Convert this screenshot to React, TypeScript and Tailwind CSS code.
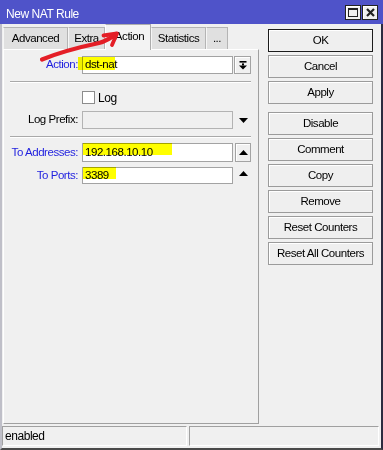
import React from "react";

function Tab({ label, w, active }: { label: string; w: string; active?: boolean }) {
  if (active) {
    return (
      <div
        className={`${w} h-[26px] -mb-[1px] relative z-10 border border-b-0 border-[#adadad] border-l-white bg-[#f3f3f3] flex justify-center pt-[6px] pl-[3px]`}
      >
        {label}
      </div>
    );
  }
  return (
    <div
      className={`${w} h-[22px] border border-b-0 border-[#b4b4b4] border-l-[#f6f6f6] bg-[#e0e0e0] flex items-center justify-center pt-[1px]`}
    >
      {label}
    </div>
  );
}

function SideButton({ label, main, className = "" }: { label: string; main?: boolean; className?: string }) {
  return (
    <button
      className={`h-[23px] w-[105px] border bg-[#efefef] shadow-[inset_1px_1px_0_#ffffff] flex items-center justify-center ${
        main ? "border-[#1c1c1c]" : "border-[#9b9b9b]"
      } ${className}`}
    >
      {label}
    </button>
  );
}

function UpTriangle() {
  return (
    <svg width="9" height="5" viewBox="0 0 9 5">
      <polygon points="0,5 9,5 4.5,0" fill="#000" />
    </svg>
  );
}

function DownTriangle() {
  return (
    <svg width="9" height="5" viewBox="0 0 9 5">
      <polygon points="0,0 9,0 4.5,5" fill="#000" />
    </svg>
  );
}

function Separator() {
  return <div className="ml-[6px] w-[241px] h-[2px] border-t border-t-[#a9a9a9] border-b border-b-white" />;
}

export default function App() {
  return (
    <div className="relative w-[383px] h-[450px] flex flex-col bg-[#f0f0f0] overflow-hidden font-['Liberation_Sans',Arial,sans-serif] text-[11.5px] tracking-[-0.45px] leading-none text-black">
      {/* title bar */}
      <div className="h-[24px] shrink-0 bg-[#4f53c9] flex items-center pl-[6px] pr-[5px]">
        <span className="text-white text-[12px] pt-[4px]">New NAT Rule</span>
        <div className="ml-auto flex gap-[1px] pt-[1px]">
          <div className="w-[16px] h-[15px] bg-[#f0f0f0] border border-[#222] shadow-[inset_1px_1px_0_#fff] flex items-center justify-center">
            <div className="w-[10px] h-[9px] border border-t-2 border-[#222]" />
          </div>
          <div className="w-[16px] h-[15px] bg-[#f0f0f0] border border-[#222] shadow-[inset_1px_1px_0_#fff] flex items-center justify-center">
            <svg width="9" height="9" viewBox="0 0 9 9">
              <path d="M1 1 L8 8 M8 1 L1 8" stroke="#222" strokeWidth="2.2" />
            </svg>
          </div>
        </div>
      </div>

      <div className="flex-1 flex flex-col border-l-2 border-r-2 border-b-2 border-l-[#bfbfc8] border-r-[#2c2c40] border-b-[#4a4a4a]">
        <div className="flex-1 flex pl-[1px]">
          {/* tabs + panel */}
          <div className="w-[256px] flex flex-col">
            <div className="h-[25px] flex items-end">
              <Tab label="Advanced" w="w-[65px]" />
              <Tab label="Extra" w="w-[37px]" />
              <Tab label="Action" w="w-[46px]" active />
              <Tab label="Statistics" w="w-[55px]" />
              <Tab label="..." w="w-[22px]" />
            </div>
            <div className="flex-1 border border-l-white border-t-white border-r-[#a0a0a0] border-b-[#a0a0a0] flex flex-col">
              {/* Action */}
              <div className="mt-[6px] h-[18px] flex items-center">
                <span className="w-[74px] text-right text-[#1f1fdf]">Action:</span>
                <div className="ml-[4px] w-[151px] h-[18px] bg-white border border-[#a3a3a3] flex items-center pl-[2px]">
                  dst-nat
                </div>
                <div className="ml-[1px] w-[17px] h-[18px] border border-[#a3a3a3] bg-[#f0f0f0] shadow-[inset_1px_1px_0_#fff] flex items-center justify-center">
                  <svg width="8" height="9" viewBox="0 0 8 9">
                    <rect x="0.5" y="0" width="7" height="1.6" fill="#000" />
                    <rect x="3" y="2.4" width="2" height="2" fill="#000" />
                    <polygon points="0,4.4 8,4.4 4,8.6" fill="#000" />
                  </svg>
                </div>
              </div>

              <div className="mt-[7px]">
                <Separator />
              </div>

              {/* Log */}
              <div className="mt-[8px] h-[13px] flex items-center">
                <div className="w-[78px]" />
                <div className="w-[13px] h-[13px] bg-white border border-[#8c8c8c]" />
                <span className="ml-[3px] text-[12px]">Log</span>
              </div>

              {/* Log Prefix */}
              <div className="mt-[7px] h-[18px] flex items-center">
                <span className="w-[74px] text-right">Log Prefix:</span>
                <div className="ml-[4px] w-[151px] h-[18px] bg-[#f0f0f0] border border-[#b3b3b3]" />
                <div className="ml-[6px] flex items-center">
                  <DownTriangle />
                </div>
              </div>

              <div className="mt-[7px]">
                <Separator />
              </div>

              {/* To Addresses */}
              <div className="mt-[5px] h-[19px] flex items-center">
                <span className="w-[74px] text-right text-[#1f1fdf]">To Addresses:</span>
                <div className="ml-[4px] w-[151px] h-[19px] bg-white border border-[#a3a3a3] flex items-center pl-[2px]">
                  192.168.10.10
                </div>
                <div className="ml-[2px] w-[16px] h-[19px] border border-[#a3a3a3] bg-[#f0f0f0] shadow-[inset_1px_1px_0_#fff] flex items-center justify-center">
                  <UpTriangle />
                </div>
              </div>

              {/* To Ports */}
              <div className="mt-[5px] h-[17px] flex items-center">
                <span className="w-[74px] text-right text-[#1f1fdf]">To Ports:</span>
                <div className="ml-[4px] w-[151px] h-[17px] bg-white border border-[#a3a3a3] flex items-center pl-[2px]">
                  3389
                </div>
                <div className="ml-[6px] flex items-center pb-[4px]">
                  <UpTriangle />
                </div>
              </div>
            </div>
          </div>

          {/* side buttons */}
          <div className="ml-[9px] mt-[5px] w-[105px] flex flex-col gap-[3px]">
            <SideButton label="OK" main />
            <SideButton label="Cancel" />
            <SideButton label="Apply" />
            <SideButton label="Disable" className="mt-[5px]" />
            <SideButton label="Comment" />
            <SideButton label="Copy" />
            <SideButton label="Remove" />
            <SideButton label="Reset Counters" />
            <SideButton label="Reset All Counters" />
          </div>
        </div>

        {/* status bar */}
        <div className="h-[24px] shrink-0 flex items-center gap-[2px]">
          <div className="w-[185px] h-[20px] border border-t-[#a0a0a0] border-l-[#a0a0a0] border-r-white border-b-white flex items-center pl-[2px] text-[12px]">
            enabled
          </div>
          <div className="w-[190px] h-[20px] border border-t-[#a0a0a0] border-l-[#a0a0a0] border-r-white border-b-white" />
        </div>
      </div>

      {/* highlighter marks */}
      <div className="absolute z-20 left-[78px] top-[57px] w-[37px] h-[13px] bg-[#ffff00] mix-blend-multiply pointer-events-none" />
      <div className="absolute z-20 left-[83px] top-[143px] w-[89px] h-[12px] bg-[#ffff00] mix-blend-multiply pointer-events-none" />
      <div className="absolute z-20 left-[83px] top-[167px] w-[33px] h-[12px] bg-[#ffff00] mix-blend-multiply pointer-events-none" />

      {/* red annotation arrow */}
      <svg className="absolute z-30 left-0 top-0 pointer-events-none" width="383" height="450" viewBox="0 0 383 450">
        <path
          d="M42 59.5 C 58 53, 80 47, 99 43 C 106 41, 111 38, 116 34"
          fill="none"
          stroke="#e41e26"
          strokeWidth="4.2"
          strokeLinecap="round"
        />
        <path
          d="M103.5 35.5 L117 33.5 L112 45"
          fill="none"
          stroke="#e41e26"
          strokeWidth="3.8"
          strokeLinecap="round"
          strokeLinejoin="round"
        />
      </svg>
    </div>
  );
}
